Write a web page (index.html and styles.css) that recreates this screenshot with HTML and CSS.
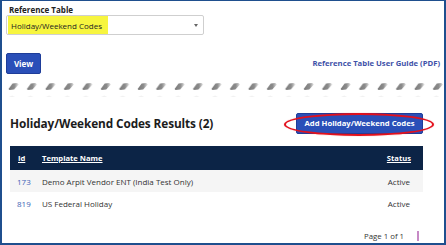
FILE: index.html
```html
<!DOCTYPE html>
<html>
<head>
<meta charset="utf-8">
<link rel="stylesheet" href="styles.css">
</head>
<body>
<div class="frame">
  <div class="top">
    <div class="label">Reference Table</div>
    <div class="select">
      <span class="hl">Holiday/Weekend Codes</span>
      <span class="arrow"></span>
    </div>
    <div class="actions">
      <button class="btn view">View</button>
      <a class="guide">Reference Table User Guide (PDF)</a>
    </div>
  </div>
  <svg class="tear" width="442" height="22" viewBox="0 0 442 22">
    <defs>
      <linearGradient id="g" x1="0" y1="0" x2="1" y2="0">
        <stop offset="0" stop-color="#7a7a7a"/>
        <stop offset="0.6" stop-color="#8c8c8c"/>
        <stop offset="1" stop-color="#e0e0e0"/>
      </linearGradient>
      <pattern id="p" x="4" y="0" width="18.45" height="22" patternUnits="userSpaceOnUse">
        <path d="M2.5 9 L6.5 3.5 L11 3 L12.5 4.5 L8 9.5 L3.5 10 Z" fill="url(#g)"/>
        <path d="M3 17 L6 15.5 L9 17 Z" fill="#f1f1f1"/>
      </pattern>
    </defs>
    <rect x="0" y="0" width="442" height="22" fill="url(#p)"/>
  </svg>
  <div class="results">
    <div class="head">
      <h2>Holiday/Weekend Codes Results (2)</h2>
      <div class="addwrap">
        <button class="btn add">Add Holiday/Weekend Codes</button>
        <span class="ring"></span>
      </div>
    </div>
    <table class="tbl">
      <thead>
        <tr><th class="c-id"><u>Id</u></th><th><u>Template Name</u></th><th class="c-st"><u>Status</u></th></tr>
      </thead>
      <tbody>
        <tr class="odd"><td class="c-id"><a>173</a></td><td>Demo Arpit Vendor ENT (India Test Only)</td><td class="c-st">Active</td></tr>
        <tr><td class="c-id"><a>819</a></td><td>US Federal Holiday</td><td class="c-st">Active</td></tr>
      </tbody>
    </table>
    <div class="pager"><span>Page 1 of 1</span><span class="bar"></span></div>
  </div>
</div>
</body>
</html>
```
FILE: styles.css
```css
* { box-sizing: border-box; }
html, body { margin: 0; padding: 0; background: #fff; }
body { font-family: "Open Sans", "Liberation Sans", sans-serif; color: #222; }
.frame {
  width: 446px; height: 245px;
  border-style: solid; border-color: #1f4f8e;
  border-width: 1px 2px 2px 2px;
  overflow: hidden;
  position: relative;
}
.top { padding: 3px 4px 0 4px; }
.label { font-size: 8px; font-weight: 700; color: #222; line-height: 11px; padding-left: 3px; }
.select {
  width: 198px; height: 20px; margin-top: 0;
  border: 1px solid #cfcfcf; border-radius: 2px;
  display: flex; align-items: center; justify-content: space-between;
  padding: 0 5px 0 1px;
  font-size: 8px;
}
.hl { background: #f7f53f; height: 18px; width: 100px; display: flex; align-items: center; padding-left: 3px; color: #222; }
.arrow { width: 0; height: 0; border-left: 2.5px solid transparent; border-right: 2.5px solid transparent; border-top: 3px solid #666; }
.actions { display: flex; justify-content: space-between; align-items: flex-end; margin-top: 18px; }
.btn {
  font-family: "Open Sans", "Liberation Sans", sans-serif;
  font-weight: 700; color: #fff; background: #2a4fb8;
  border: 1px solid #1e3d99; border-radius: 2px; cursor: pointer;
}
.view { width: 35px; height: 21px; font-size: 8px; padding: 0; }
.guide { font-size: 7.7px; font-weight: 700; color: #3e51a8; margin-bottom: 6px; margin-right: 0; }
.tear { display: block; margin-top: 6px; }
.results { padding: 0 21px 0 8px; }
.head { display: flex; justify-content: space-between; align-items: center; margin-top: 10px; height: 22px; }
h2 { margin: 0; font-size: 11.8px; font-weight: 700; color: #1c1c1c; letter-spacing: -0.1px; }
.addwrap { position: relative; margin-right: 0; }
.add { font-size: 7.7px; height: 21px; width: 127px; padding: 0; display: block; }
.ring {
  position: absolute; left: -12px; top: 0; width: 150px; height: 23px;
  border: 2.5px solid #e3101c; border-radius: 50%;
  box-shadow: 0 0 1px rgba(227,16,28,0.6);
  pointer-events: none;
}
.tbl { width: 413px; border-collapse: collapse; margin-top: 12px; font-size: 8px; }
.tbl th { background: #0c2446; color: #fff; font-weight: 700; text-align: left; height: 24px; padding: 0; font-size: 7.6px; }
.tbl th u { text-underline-offset: 1px; }
.tbl td { height: 22px; padding: 0; color: #333; }
.tbl .c-id { width: 32px; padding-left: 8px; }
.tbl td.c-id { padding-left: 7px; }
.tbl .c-st { text-align: right; padding-right: 12px; }
.tbl td.c-st { padding-right: 13px; }
.tbl tr.odd td { background: #f5f5f5; }
.tbl td a { color: #3e62b5; }
.pager { display: flex; justify-content: flex-end; align-items: center; margin-top: 17px; font-size: 7.8px; color: #333; gap: 13px; padding-right: 0; }
.bar { width: 2px; height: 10px; background: #c78ac6; margin-right: 4px; }
```
